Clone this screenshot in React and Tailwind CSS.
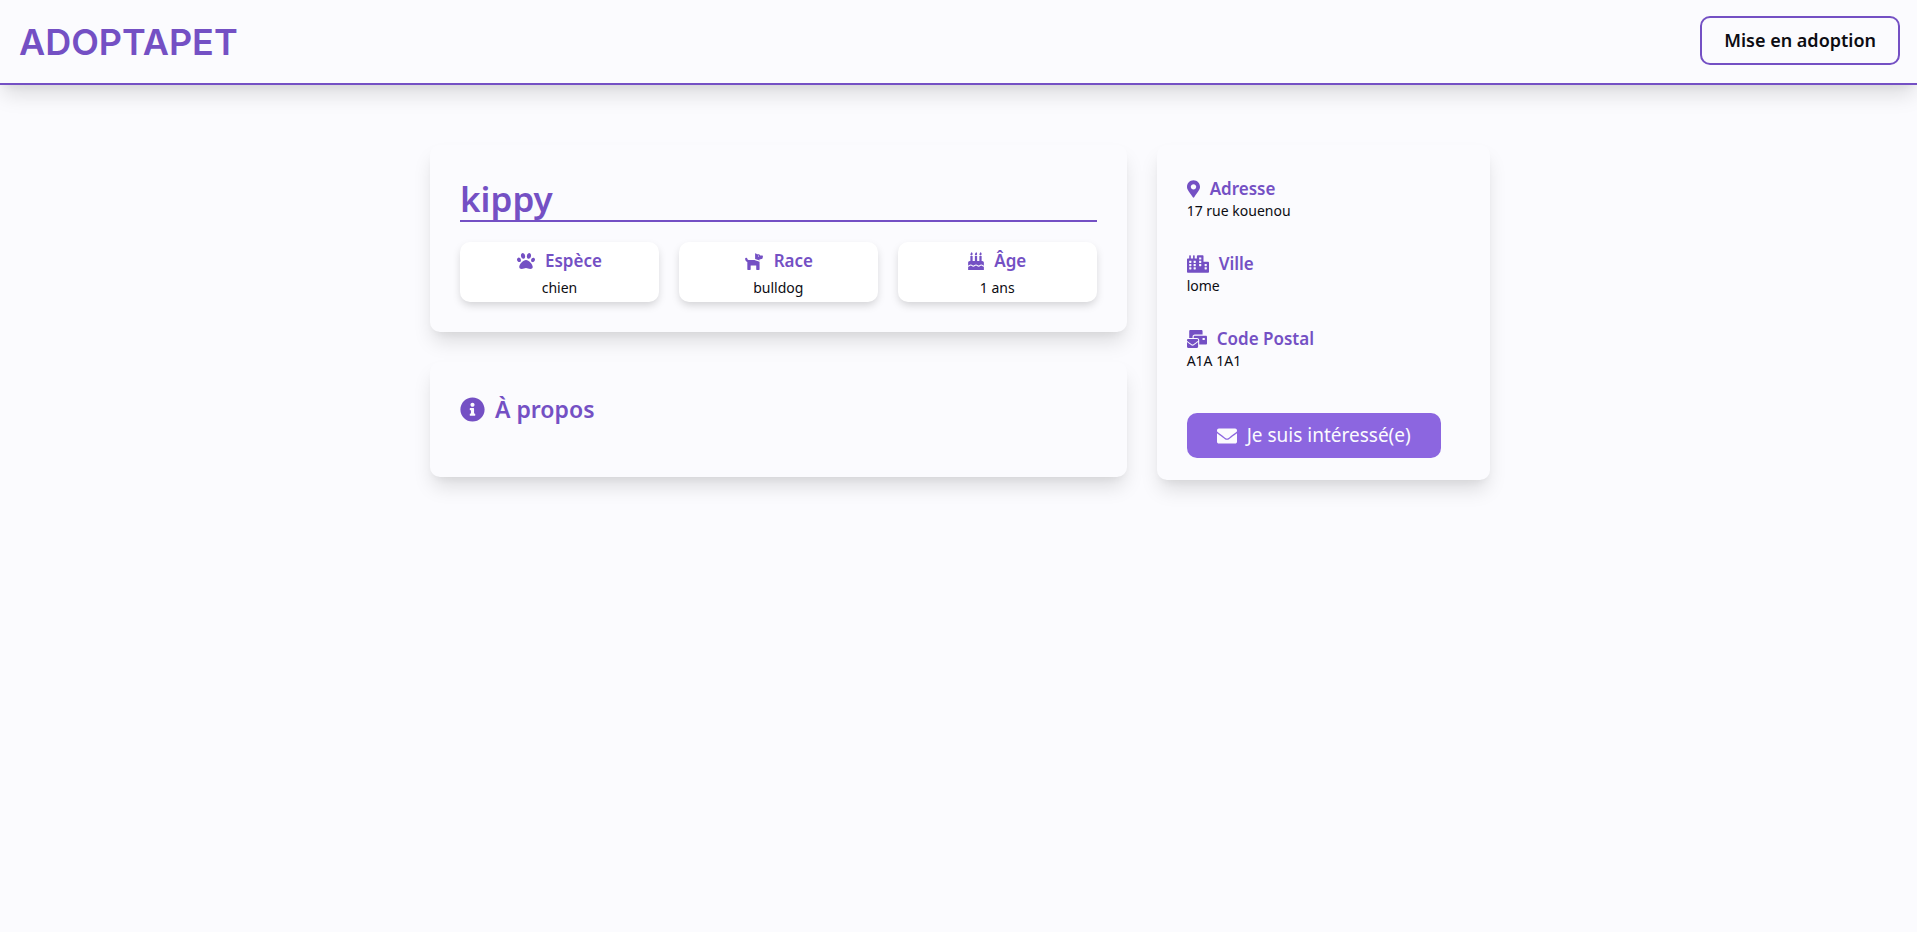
import {
  FaBirthdayCake,
  FaCity,
  FaDog,
  FaEnvelope,
  FaInfoCircle,
  FaMailBulk,
  FaMapMarkerAlt,
  FaPaw,
} from "react-icons/fa";

const raised = "shadow-[0_12px_20px_-3px_rgba(0,0,0,0.13),0_5px_8px_-4px_rgba(0,0,0,0.06)]";
const card = `rounded-[10px] bg-[#fbfbfe] ${raised}`;

const traits = [
  { icon: FaPaw, size: "w-[18px]", label: "Espèce", value: "chien" },
  { icon: FaDog, size: "w-5", label: "Race", value: "bulldog" },
  { icon: FaBirthdayCake, size: "w-4", label: "Âge", value: "1 ans" },
];

const contact = [
  { icon: FaMapMarkerAlt, size: "w-[13px]", label: "Adresse", value: "17 rue kouenou" },
  { icon: FaCity, size: "w-[22px]", label: "Ville", value: "lome" },
  { icon: FaMailBulk, size: "w-5", label: "Code Postal", value: "A1A 1A1" },
];

function Header() {
  return (
    <header className={`flex items-center justify-between border-b-2 border-[#7450c4] bg-[#fbfbfe] pt-4 pr-[17px] pb-[18px] pl-[19px] ${raised}`}>
      <a href="#" className="pt-1 font-[Inter,sans-serif] text-[36px] leading-[45px] font-semibold text-[#7450c4]">
        ADOPTAPET
      </a>
      <button
        type="button"
        className="rounded-[10px] border-2 border-[#7450c4] px-[22px] py-[10px] text-[18px] leading-[25px] font-semibold text-[#0c0c12]"
      >
        Mise en adoption
      </button>
    </header>
  );
}

function Trait({ icon: Icon, size, label, value }) {
  return (
    <div className="rounded-[10px] bg-white px-2 pt-[5px] pb-[2px] text-center shadow-[0_4px_8px_-1px_rgba(0,0,0,0.17)]">
      <h2 className="flex items-center justify-center gap-[10px] text-[17px] leading-[27px] font-semibold text-[#7450c4]">
        <Icon className={`h-[18px] ${size}`} />
        {label}
      </h2>
      <p className="pt-[2px] text-[14px] leading-6">{value}</p>
    </div>
  );
}

function ContactItem({ icon: Icon, size, label, value }) {
  return (
    <div className="mb-[31px]">
      <h2 className="flex items-center gap-[10px] text-[17px] leading-6 font-semibold text-[#7450c4]">
        <Icon className={`h-[18px] ${size}`} />
        {label}
      </h2>
      <p className="text-[14px] leading-5">{value}</p>
    </div>
  );
}

export default function App() {
  return (
    <div className="min-h-screen bg-[#fbfbfe] font-['Noto_Sans',sans-serif] text-[#0c0c12]">
      <Header />
      <main className="pt-[60px] pb-10 pl-[3px]">
        <div className="mx-auto grid max-w-[1060px] grid-cols-3 items-start gap-[30px]">
          <div className="col-span-2 flex flex-col gap-[30px]">
            <section className={`${card} p-[30px]`}>
              <h1 className="mb-5 border-b-2 border-[#7450c4] pt-[2px] text-[35px] leading-[43px] font-semibold text-[#7450c4]">
                kippy
              </h1>
              <div className="grid grid-cols-3 gap-5">
                {traits.map((t) => (
                  <Trait key={t.label} {...t} />
                ))}
              </div>
            </section>
            <section className={`${card} px-[30px] pt-[30px] pb-[50px]`}>
              <h2 className="flex items-center gap-[10px] text-[23px] leading-[35px] font-semibold text-[#7450c4]">
                <FaInfoCircle className="size-[25px]" />
                À propos
              </h2>
            </section>
          </div>
          <aside className={`${card} px-[30px] pt-8 pb-[22px]`}>
            {contact.map((c) => (
              <ContactItem key={c.label} {...c} />
            ))}
            <button
              type="button"
              className="mt-[42px] flex items-center gap-[10px] rounded-[10px] bg-[#8c66e0] px-[30px] py-[10px] text-[19px] leading-[25px] text-[#fbfbfe]"
            >
              <FaEnvelope className="size-5" />
              Je suis intéressé(e)
            </button>
          </aside>
        </div>
      </main>
    </div>
  );
}
